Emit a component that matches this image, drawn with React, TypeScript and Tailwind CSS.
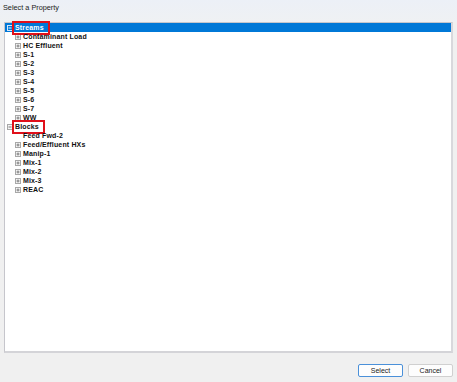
type Node = {
  label: string
  level: 0 | 1
  expander?: 'plus' | 'minus'
  selected?: boolean
  marked?: boolean
}

const rows: Node[] = [
  { label: 'Streams', level: 0, expander: 'minus', selected: true, marked: true },
  { label: 'Contaminant Load', level: 1, expander: 'plus' },
  { label: 'HC Effluent', level: 1, expander: 'plus' },
  { label: 'S-1', level: 1, expander: 'plus' },
  { label: 'S-2', level: 1, expander: 'plus' },
  { label: 'S-3', level: 1, expander: 'plus' },
  { label: 'S-4', level: 1, expander: 'plus' },
  { label: 'S-5', level: 1, expander: 'plus' },
  { label: 'S-6', level: 1, expander: 'plus' },
  { label: 'S-7', level: 1, expander: 'plus' },
  { label: 'WW', level: 1, expander: 'plus' },
  { label: 'Blocks', level: 0, expander: 'minus', marked: true },
  { label: 'Feed Fwd-2', level: 1 },
  { label: 'Feed/Effluent HXs', level: 1, expander: 'plus' },
  { label: 'Manip-1', level: 1, expander: 'plus' },
  { label: 'Mix-1', level: 1, expander: 'plus' },
  { label: 'Mix-2', level: 1, expander: 'plus' },
  { label: 'Mix-3', level: 1, expander: 'plus' },
  { label: 'REAC', level: 1, expander: 'plus' },
]

function Expander({ kind, light }: { kind: 'plus' | 'minus'; light?: boolean }) {
  const stroke = light ? '#d6e8fa' : '#a8a8a8'
  const mark = light ? '#ffffff' : '#7a7a7a'
  return (
    <svg width="6" height="6" viewBox="0 0 6 6" className="shrink-0">
      <rect x="0.5" y="0.5" width="5" height="5" fill={light ? 'none' : '#f4f4f4'} stroke={stroke} strokeWidth="1" />
      <line x1="1.5" y1="3" x2="4.5" y2="3" stroke={mark} strokeWidth="1" />
      {kind === 'plus' && <line x1="3" y1="1.5" x2="3" y2="4.5" stroke={mark} strokeWidth="1" />}
    </svg>
  )
}

function TreeRow({ node }: { node: Node }) {
  const indent = node.level === 0 ? 'pl-[2px]' : 'pl-[10px]'
  return (
    <div
      className={`flex items-center h-[9px] ${indent} ${
        node.selected ? 'bg-[#0078d7] text-white' : 'text-[#111]'
      }`}
    >
      <div className="w-[8px] flex items-center">
        {node.expander && <Expander kind={node.expander} light={node.selected} />}
      </div>
      <span className="relative font-bold text-[7px] leading-[9px] tracking-[0.15px] whitespace-nowrap">
        {node.label}
        {node.marked && (
          <span className="absolute -left-[3px] -right-[6px] -top-[2px] -bottom-[3px] border-2 border-[#e0101a]" />
        )}
      </span>
    </div>
  )
}

export default function App() {
  return (
    <div
      className="w-[457px] h-[382px] bg-[#f0f0f0] flex flex-col overflow-hidden"
      style={{ fontFamily: '"Liberation Sans", Arial, sans-serif' }}
    >
      <div className="h-[22px] bg-gradient-to-b from-[#ecf0f7] to-[#eff1f3] pl-[3px] pt-[3px] text-[7.3px] text-[#222]">
        Select a Property
      </div>

      <div className="mx-[4px] h-[331px] bg-white border border-[#c6c6cc] border-b-2 border-b-[#d4d4d8] border-r-2 border-r-[#d8d8dc]">
        {rows.map(row => (
          <TreeRow key={row.label} node={row} />
        ))}
      </div>

      <div className="flex justify-end gap-[5px] pt-[11px] pr-[4px]">
        <button className="w-[45px] h-[13px] bg-[#fdfdfd] border border-[#4a90d9] rounded-[2px] text-[7px] text-[#222] leading-none">
          Select
        </button>
        <button className="w-[45px] h-[13px] bg-[#fdfdfd] border border-[#d0d0d0] rounded-[2px] text-[7px] text-[#222] leading-none">
          Cancel
        </button>
      </div>
    </div>
  )
}
